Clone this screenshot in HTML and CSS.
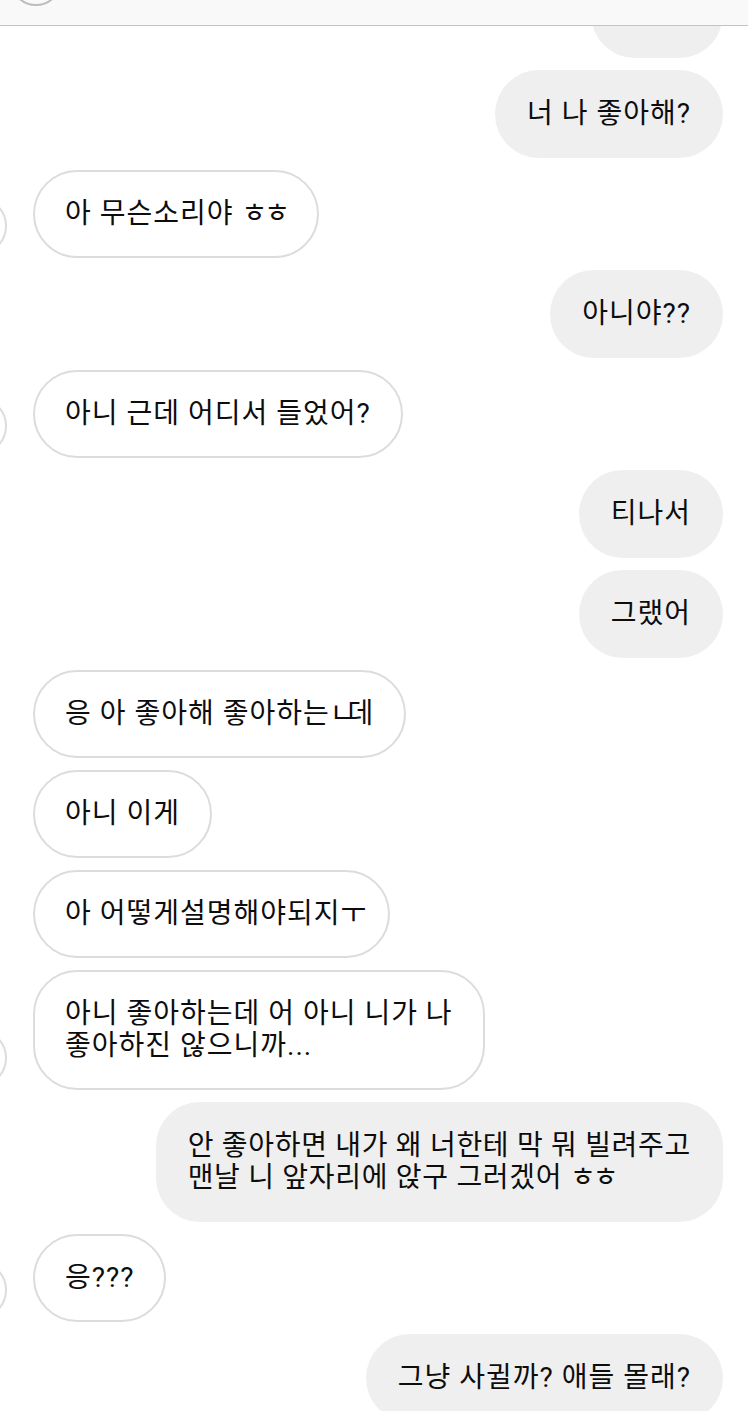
FILE: index.html
```html
<!DOCTYPE html>
<html lang="ko">
<head>
<meta charset="utf-8">
<title>Chat</title>
<link rel="stylesheet" href="styles.css">
</head>
<body>
<div class="screen">
  <div class="thread">
    <div class="row out"><div class="bubble">진짜?</div></div>
    <div class="row out"><div class="bubble">너 나 좋아해?</div></div>
    <div class="row in"><span class="avatar"></span><div class="bubble">아 무슨소리야 <span class="jamo">ㅎㅎ</span></div></div>
    <div class="row out"><div class="bubble">아니야??</div></div>
    <div class="row in"><span class="avatar"></span><div class="bubble">아니 근데 어디서 들었어?</div></div>
    <div class="row out"><div class="bubble">티나서</div></div>
    <div class="row out"><div class="bubble">그랬어</div></div>
    <div class="row in"><span class="avatar blank"></span><div class="bubble">응 아 좋아해 좋아하는<span class="jamo tight">ㄴ</span>데</div></div>
    <div class="row in"><span class="avatar blank"></span><div class="bubble">아니 이게</div></div>
    <div class="row in"><span class="avatar blank"></span><div class="bubble">아 어떻게설명해야되지<span class="jamo tight">ㅜ</span></div></div>
    <div class="row in"><span class="avatar"></span><div class="bubble">아니 좋아하는데 어 아니 니가 나<br>좋아하진 않으니까...</div></div>
    <div class="row out"><div class="bubble narrow">안 좋아하면 내가 왜 너한테 막 뭐 빌려주고<br>맨날 니 앞자리에 앉구 그러겠어 <span class="jamo">ㅎㅎ</span></div></div>
    <div class="row in"><span class="avatar"></span><div class="bubble">응???</div></div>
    <div class="row out"><div class="bubble">그냥 사귈까? 애들 몰래?</div></div>
  </div>
  <div class="header"><span class="header-avatar"></span></div>
</div>
</body>
</html>
```

FILE: styles.css
```css
html, body {
  margin: 0;
  padding: 0;
  background: #ffffff;
}

.screen {
  position: relative;
  width: 748px;
  height: 1411px;
  overflow: hidden;
  background: #ffffff;
  font-family: "Roboto", "Noto Sans CJK KR", sans-serif;
  color: #0d0d0d;
}

.header {
  position: absolute;
  top: 0;
  left: 0;
  right: 0;
  height: 25px;
  background: #f9f9f9;
  border-bottom: 1px solid #c4c4c4;
  overflow: hidden;
}

.header-avatar {
  position: absolute;
  left: 10px;
  top: -46px;
  width: 48px;
  height: 48px;
  border: 2px solid #bdbdbd;
  border-radius: 50%;
  background: #f9f9f9;
}

.thread {
  display: flex;
  flex-direction: column;
  gap: 12px;
  margin-top: -30px;
  padding: 0 25px 0 0;
}

.row {
  display: flex;
  align-items: flex-end;
}

.row.out {
  justify-content: flex-end;
}

.row.in {
  justify-content: flex-start;
  margin-left: -51px;
}

.avatar {
  flex: none;
  width: 54px;
  height: 54px;
  margin: 0 26px 3px 0;
  border: 2px solid #dcdcdc;
  border-radius: 50%;
  background: #ffffff;
}

.avatar.blank {
  visibility: hidden;
}

.bubble {
  font-size: 28px;
  letter-spacing: 1px;
  line-height: 32px;
  border-radius: 44px;
  white-space: nowrap;
}

.bubble.narrow {
  letter-spacing: 0.7px;
}

.jamo {
  letter-spacing: -3px;
}

.jamo.tight {
  letter-spacing: -8px;
}

.out .bubble {
  background: #efefef;
  padding: 28px 32px;
}

.in .bubble {
  background: #ffffff;
  border: 2px solid #dcdcdc;
  padding: 26px 30px;
}
```
